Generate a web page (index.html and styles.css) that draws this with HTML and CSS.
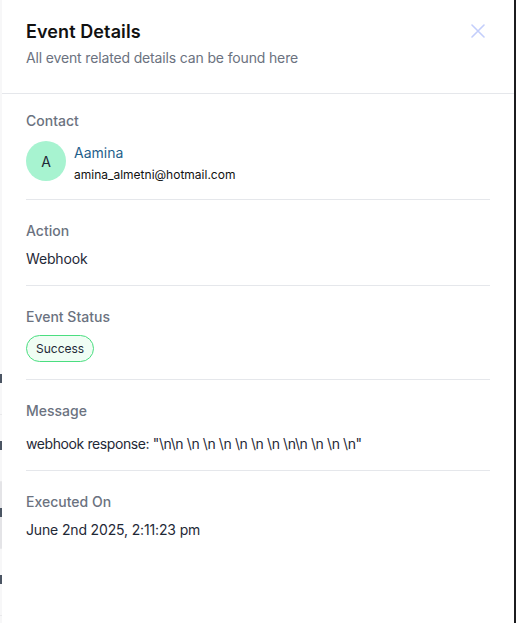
FILE: index.html
```html
<!DOCTYPE html>
<html lang="en">
<head>
<meta charset="utf-8">
<title>Event Details</title>
<link rel="stylesheet" href="styles.css">
</head>
<body>
<div class="backdrop">
  <div class="bg-row mark"></div>
  <div class="bg-row mark"></div>
  <div class="bg-row mark shaded"></div>
  <div class="bg-row mark"></div>
</div>
<aside class="panel">
  <header class="header">
    <div class="header-text">
      <h1 class="title">Event Details</h1>
      <p class="subtitle">All event related details can be found here</p>
    </div>
    <button class="close" aria-label="Close">
      <svg width="14" height="14" viewBox="0 0 14 14" fill="none">
        <path d="M1 1L13 13M13 1L1 13" stroke="#c3cefb" stroke-width="1.6" stroke-linecap="round"/>
      </svg>
    </button>
  </header>
  <div class="content">
    <section class="section section-contact">
      <div class="label">Contact</div>
      <div class="contact-row">
        <div class="avatar">A</div>
        <div class="contact-text">
          <div class="contact-name">Aamina</div>
          <div class="contact-email">amina_almetni@hotmail.com</div>
        </div>
      </div>
    </section>
    <section class="section">
      <div class="label">Action</div>
      <div class="value">Webhook</div>
    </section>
    <section class="section section-status">
      <div class="label">Event Status</div>
      <div class="badge-wrap"><span class="badge">Success</span></div>
    </section>
    <section class="section section-message">
      <div class="label">Message</div>
      <div class="value value-message">webhook response: "\n\n \n \n \n \n \n \n \n\n \n \n \n"</div>
    </section>
    <section class="section section-last">
      <div class="label">Executed On</div>
      <div class="value">June 2nd 2025, 2:11:23 pm</div>
    </section>
  </div>
</aside>
<div class="edge"></div>
</body>
</html>
```

FILE: styles.css
```css
* {
  box-sizing: border-box;
}

html, body {
  margin: 0;
  padding: 0;
}

body {
  display: flex;
  height: 623px;
  overflow: hidden;
  background: #f6f6f7;
  font-family: Inter, "Noto Sans", "Liberation Sans", sans-serif;
  color: #1f2937;
}

.backdrop {
  width: 2px;
  flex: none;
  display: flex;
  flex-direction: column;
  padding-top: 348px;
  background: #f7f7f8;
}

.bg-row {
  height: 67px;
  border-bottom: 1px solid #e9e9eb;
}

.bg-row.mark {
  background: linear-gradient(#f7f7f8 26px, #4b5563 26px, #4b5563 35px, #f7f7f8 35px);
}

.bg-row.shaded {
  background: linear-gradient(#e4e4e7 26px, #4b5563 26px, #4b5563 35px, #e4e4e7 35px);
}

.panel {
  flex: 1;
  background: #ffffff;
  display: flex;
  flex-direction: column;
}

.edge {
  width: 2px;
  flex: none;
  background: #1c1c1f;
}

.header {
  display: flex;
  justify-content: space-between;
  align-items: flex-start;
  padding: 18px 24px 25px 24px;
  border-bottom: 1px solid #e5e7eb;
}

.title {
  margin: 0;
  font-size: 18px;
  line-height: 28px;
  font-weight: 600;
  color: #111111;
  letter-spacing: 0.1px;
}

.subtitle {
  margin: 2px 0 0;
  font-size: 14px;
  line-height: 20px;
  color: #6b7280;
  letter-spacing: -0.15px;
}

.close {
  width: 24px;
  height: 24px;
  margin-top: 1px;
  padding: 0;
  border: none;
  background: transparent;
  display: flex;
  align-items: center;
  justify-content: center;
}

.content {
  padding: 0 24px;
}

.section {
  padding: 21px 0 16px;
  border-bottom: 1px solid #e5e7eb;
  display: flex;
  flex-direction: column;
  gap: 8px;
}

.section-contact {
  padding: 17px 0 14px;
  gap: 10px;
}

.section-status {
  padding-bottom: 17px;
}

.section-message {
  gap: 13px;
}

.section-last {
  border-bottom: none;
}

.label {
  font-size: 14px;
  line-height: 20px;
  font-weight: 500;
  color: #6b7280;
}

.value {
  font-size: 14px;
  line-height: 20px;
  color: #1f2937;
  letter-spacing: -0.15px;
}

.value-message {
  letter-spacing: -0.4px;
}

.contact-row {
  display: flex;
  align-items: flex-start;
  gap: 8px;
  height: 44px;
}

.avatar {
  width: 40px;
  height: 40px;
  border-radius: 50%;
  background: #a7f3d0;
  display: flex;
  align-items: center;
  justify-content: center;
  font-size: 14px;
  color: #1f2937;
}

.contact-text {
  padding-top: 2px;
  display: flex;
  flex-direction: column;
  gap: 2px;
}

.contact-name {
  font-size: 14px;
  line-height: 20px;
  color: #1f5f8b;
}

.contact-email {
  font-size: 12px;
  line-height: 20px;
  color: #111111;
}

.badge-wrap {
  display: flex;
}

.badge {
  display: inline-flex;
  align-items: center;
  height: 27px;
  padding: 0 9px;
  border: 1px solid #4ade80;
  border-radius: 999px;
  background: #f0fdf4;
  font-size: 12px;
  color: #1f2937;
}
```
